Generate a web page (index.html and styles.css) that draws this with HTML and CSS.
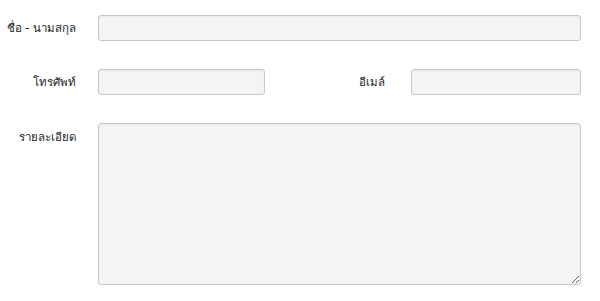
FILE: index.html
```html
<!DOCTYPE html>
<html lang="th">
<head>
  <meta charset="UTF-8" />
  <meta name="viewport" content="width=device-width, initial-scale=1.0" />
  <title>ติดต่อเรา</title>
  <link rel="stylesheet" href="styles.css">
</head>
<body>
  <!-- Contact form -->
  <form class="contact">
    <div class="row">
      <label class="label" for="name">ชื่อ - นามสกุล</label>
      <input class="field" type="text" id="name" />
    </div>
    <div class="row">
      <label class="label" for="phone">โทรศัพท์</label>
      <input class="field short" type="text" id="phone" />
      <label class="label email-label" for="email">อีเมล์</label>
      <input class="field email" type="text" id="email" />
    </div>
    <div class="row top">
      <label class="label" for="detail">รายละเอียด</label>
      <textarea class="field area" id="detail"></textarea>
    </div>
  </form>
</body>
</html>
```

FILE: styles.css
```css
/* Page */
body {
  margin: 0;
  background-color: #fff;
  font-family: Tahoma, "DejaVu Sans", "Noto Sans", sans-serif;
  font-size: 11.5px;
  color: #222;
}
/* Form container */
.contact {
  width: 581px;
  padding-top: 15px;
  display: flex;
  flex-direction: column;
  gap: 28px;
}
/* One form row */
.row {
  display: flex;
  align-items: center;
}
.row.top {
  align-items: flex-start;
}
/* Labels on the left */
.label {
  width: 76px;
  flex: none;
  display: flex;
  justify-content: flex-end;
  white-space: nowrap;
  margin-right: 22px;
}
.row.top .label {
  padding-top: 5px;
}
/* Inputs */
.field {
  flex: 1;
  box-sizing: border-box;
  height: 26px;
  margin: 0;
  border: 1px solid #c8c8c8;
  border-radius: 3px;
  background-color: #f4f4f4;
  box-shadow: inset 0 1px 2px rgba(0, 0, 0, 0.06);
  font: inherit;
  padding: 2px 6px;
}
.field.short {
  flex: none;
  width: 167px;
}
.email-label {
  flex: 1;
  width: auto;
  margin-right: 26px;
}
.field.email {
  flex: none;
  width: 170px;
}
/* Textarea */
.field.area {
  height: 162px;
  resize: both;
}
```
